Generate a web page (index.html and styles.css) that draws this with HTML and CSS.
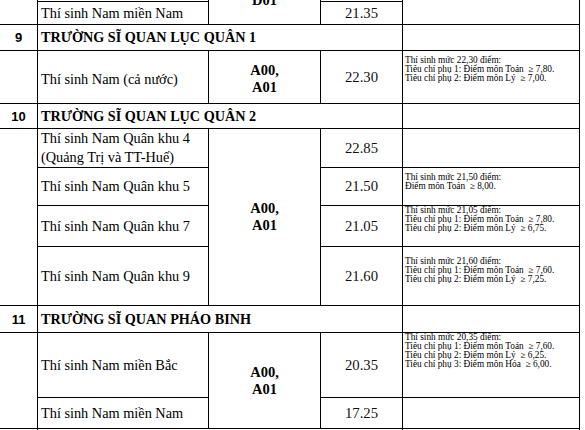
FILE: index.html
```html
<!DOCTYPE html>
<html lang="vi">
<head>
<meta charset="utf-8">
<title>Điểm chuẩn</title>
<link rel="stylesheet" href="styles.css">
</head>
<body>
<table class="scores">
  <colgroup>
    <col class="c-no"><col class="c-name"><col class="c-code"><col class="c-score"><col class="c-note">
  </colgroup>
  <tbody>
    <tr class="h-prev">
      <td rowspan="2"></td>
      <td class="txt"></td>
      <td rowspan="2" class="code code-cut">D01</td>
      <td class="score"></td>
      <td rowspan="2"></td>
    </tr>
    <tr class="h-23">
      <td class="txt">Thí sinh Nam miền Nam</td>
      <td class="score">21.35</td>
    </tr>
    <tr class="head h-26">
      <td class="no">9</td>
      <td colspan="3" class="title">TRƯỜNG SĨ QUAN LỤC QUÂN 1</td>
      <td></td>
    </tr>
    <tr class="h-53">
      <td></td>
      <td class="txt shift">Thí sinh Nam (cả nước)</td>
      <td class="code shift">A00,<br>A01</td>
      <td class="score">22.30</td>
      <td class="note pad-m">Thí sinh mức 22,30 điểm:<br>Tiêu chí phụ 1: Điểm môn Toán &nbsp;≥ 7,80.<br>Tiêu chí phụ 2: Điểm môn Lý &nbsp;≥ 7,00.</td>
    </tr>
    <tr class="head h-25">
      <td class="no">10</td>
      <td colspan="3" class="title">TRƯỜNG SĨ QUAN LỤC QUÂN 2</td>
      <td></td>
    </tr>
    <tr class="h-38">
      <td rowspan="4"></td>
      <td class="txt txt-two">Thí sinh Nam Quân khu 4<br>(Quảng Trị và TT-Huế)</td>
      <td rowspan="4" class="code">A00,<br>A01</td>
      <td class="score">22.85</td>
      <td class="note"></td>
    </tr>
    <tr class="h-38">
      <td class="txt">Thí sinh Nam Quân khu 5</td>
      <td class="score">21.50</td>
      <td class="note pad-m">Thí sinh mức 21,50 điểm:<br>Điểm môn Toán &nbsp;≥ 8,00.</td>
    </tr>
    <tr class="h-41">
      <td class="txt">Thí sinh Nam Quân khu 7</td>
      <td class="score">21.05</td>
      <td class="note pad-s">Thí sinh mức 21,05 điểm:<br>Tiêu chí phụ 1: Điểm môn Toán &nbsp;≥ 7,80.<br>Tiêu chí phụ 2: Điểm môn Lý &nbsp;≥ 6,75.</td>
    </tr>
    <tr class="h-59">
      <td class="txt">Thí sinh Nam Quân khu 9</td>
      <td class="score">21.60</td>
      <td class="note pad-l">Thí sinh mức 21,60 điểm:<br>Tiêu chí phụ 1: Điểm môn Toán &nbsp;≥ 7,60.<br>Tiêu chí phụ 2: Điểm môn Lý &nbsp;≥ 7,25.</td>
    </tr>
    <tr class="head h-27">
      <td class="no">11</td>
      <td colspan="3" class="title">TRƯỜNG SĨ QUAN PHÁO BINH</td>
      <td></td>
    </tr>
    <tr class="h-65">
      <td rowspan="2"></td>
      <td class="txt">Thí sinh Nam miền Bắc</td>
      <td rowspan="2" class="code">A00,<br>A01</td>
      <td class="score">20.35</td>
      <td class="note pad-s">Thí sinh mức 20,35 điểm:<br>Tiêu chí phụ 1: Điểm môn Toán &nbsp;≥ 7,60.<br>Tiêu chí phụ 2: Điểm môn Lý &nbsp;≥ 6,25.<br>Tiêu chí phụ 3: Điểm môn Hóa &nbsp;≥ 6,00.</td>
    </tr>
    <tr class="h-31">
      <td class="txt">Thí sinh Nam miền Nam</td>
      <td class="score">17.25</td>
      <td class="note"></td>
    </tr>
    <tr class="head h-26">
      <td class="no"></td>
      <td colspan="3" class="title"></td>
      <td></td>
    </tr>
  </tbody>
</table>
</body>
</html>
```

FILE: styles.css
```css
html, body {
  margin: 0;
  padding: 0;
  background: #fff;
}

body {
  width: 585px;
  height: 430px;
  overflow: hidden;
  font-family: "Liberation Serif", "Times New Roman", serif;
  color: #000;
}

.scores {
  border-collapse: collapse;
  table-layout: fixed;
  width: 580px;
  margin: -39px 0 0 -1px;
}

.c-no { width: 38px; }
.c-name { width: 171px; }
.c-code { width: 112px; }
.c-score { width: 82px; }
.c-note { width: 177px; }

.scores td {
  border: 1px solid #000;
  padding: 0 3px;
  vertical-align: middle;
  overflow: hidden;
  white-space: nowrap;
}

.h-prev { height: 40px; }
.h-23 { height: 23px; }
.h-25 { height: 25px; }
.h-26 { height: 26px; }
.h-27 { height: 27px; }
.h-31 { height: 31px; }
.h-38 { height: 38px; }
.h-41 { height: 41px; }
.h-53 { height: 53px; }
.h-59 { height: 59px; }
.h-65 { height: 65px; }

.no {
  font-family: "Liberation Sans", Arial, sans-serif;
  font-weight: bold;
  font-size: 13px;
  text-align: center;
}

.title {
  font-weight: bold;
  font-size: 14.2px;
}

.txt {
  font-size: 14.3px;
  line-height: 17px;
}

.txt-two {
  line-height: 19px;
}

.code {
  font-weight: bold;
  font-size: 14.5px;
  line-height: 17px;
  text-align: center;
}

.scores td.code-cut {
  vertical-align: bottom;
  padding-bottom: 15px;
}

.scores td.shift {
  padding-top: 4px;
}

.score {
  font-size: 14.7px;
  text-align: center;
  color: #111;
}

.scores td.note {
  font-size: 9.3px;
  line-height: 9px;
  padding: 0 2px;
  vertical-align: top;
}

.scores td.pad-s { padding-top: 0; }
.scores td.pad-m { padding-top: 4.5px; }
.scores td.pad-l { padding-top: 9.5px; }
```
